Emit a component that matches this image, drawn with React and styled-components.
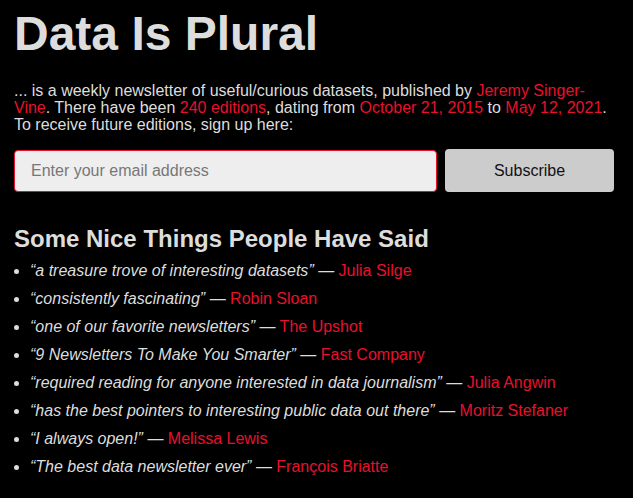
import React from 'react';
import styled, { createGlobalStyle } from 'styled-components';

const GlobalStyle = createGlobalStyle`
  html, body {
    margin: 0;
    background: #000;
  }
  body {
    font-family: "Liberation Sans", Arial, sans-serif;
    color: #ddd;
  }
`;

const Page = styled.main`
  width: 600px;
  padding: 0 14px;
`;

const Title = styled.h1`
  font-size: 48px;
  font-weight: bold;
  line-height: 1;
  margin: 10px 0 0;
  color: #ddd;
`;

const Intro = styled.p`
  font-size: 16px;
  line-height: 17px;
  margin: 24px 0 0;
`;

const Link = styled.a`
  color: #e8112d;
  text-decoration: none;
`;

const Form = styled.form`
  display: flex;
  gap: 8px;
  margin-top: 17px;
`;

const EmailInput = styled.input`
  flex: 1;
  height: 42px;
  box-sizing: border-box;
  border: 1px solid #e8112d;
  border-radius: 4px;
  background: #eee;
  font-family: inherit;
  font-size: 16px;
  padding: 0 16px;
  color: #333;
  outline: none;
  &::placeholder {
    color: #777;
  }
`;

const Button = styled.button`
  width: 169px;
  height: 43px;
  margin-top: -1px;
  border: none;
  border-radius: 4px;
  background: #ccc;
  color: #111;
  font-family: inherit;
  font-size: 16px;
`;

const Heading = styled.h2`
  font-size: 24px;
  font-weight: bold;
  line-height: 28px;
  margin: 33px 0 0;
  color: #ddd;
`;

const Quotes = styled.ul`
  margin: 4px 0 0;
  padding-left: 16px;
  font-size: 16px;
`;

const Quote = styled.li`
  line-height: 28px;
`;

const Said = styled.em`
  font-style: italic;
`;

const quotes = [
  ['a treasure trove of interesting datasets', 'Julia Silge'],
  ['consistently fascinating', 'Robin Sloan'],
  ['one of our favorite newsletters', 'The Upshot'],
  ['9 Newsletters To Make You Smarter', 'Fast Company'],
  ['required reading for anyone interested in data journalism', 'Julia Angwin'],
  ['has the best pointers to interesting public data out there', 'Moritz Stefaner'],
  ['I always open!', 'Melissa Lewis'],
  ['The best data newsletter ever', 'François Briatte'],
];

export default function App() {
  return (
    <>
      <GlobalStyle />
      <Page>
        <Title>Data Is Plural</Title>
        <Intro>
          ... is a weekly newsletter of useful/curious datasets, published by{' '}
          <Link href="#">Jeremy Singer-Vine</Link>. There have been{' '}
          <Link href="#">240 editions</Link>, dating from{' '}
          <Link href="#">October 21, 2015</Link> to <Link href="#">May 12, 2021</Link>.
          To receive future editions, sign up here:
        </Intro>
        <Form onSubmit={(e) => e.preventDefault()}>
          <EmailInput type="email" placeholder="Enter your email address" />
          <Button type="submit">Subscribe</Button>
        </Form>
        <Heading>Some Nice Things People Have Said</Heading>
        <Quotes>
          {quotes.map(([text, who]) => (
            <Quote key={who}>
              <Said>“{text}”</Said> — <Link href="#">{who}</Link>
            </Quote>
          ))}
        </Quotes>
      </Page>
    </>
  );
}
